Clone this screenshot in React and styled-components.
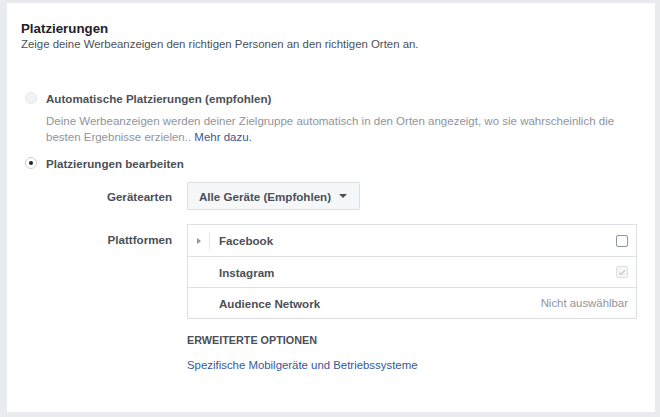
import React from "react";
import styled, { createGlobalStyle } from "styled-components";

const GlobalStyle = createGlobalStyle`
  html, body {
    margin: 0;
    padding: 0;
    background: #e9ebee;
  }
  body {
    font-family: "Liberation Sans", Arial, Helvetica, sans-serif;
    -webkit-font-smoothing: antialiased;
  }
`;

const Page = styled.div`
  width: 660px;
  height: 417px;
  padding: 3px 5px 5px 7px;
  box-sizing: border-box;
`;

const Card = styled.section`
  background: #fff;
  height: 100%;
  box-sizing: border-box;
  padding: 18px 18px 0 14px;
`;

const Title = styled.h2`
  margin: 0;
  font-size: 13.3px;
  font-weight: bold;
  color: #1d2129;
  line-height: 15px;
`;

const Subtitle = styled.p`
  margin: 0;
  font-size: 11.4px;
  color: #4b4f56;
  line-height: 16px;
`;

const Options = styled.div`
  margin-top: 37px;
  display: flex;
  flex-direction: column;
`;

const RadioRow = styled.label`
  display: flex;
  align-items: center;
  gap: 9px;
  padding-left: 4px;
  height: 18px;
  font-size: 11.6px;
  font-weight: bold;
  color: #4b4f56;
`;

const Radio = styled.span`
  width: 12px;
  height: 12px;
  border-radius: 50%;
  box-sizing: border-box;
  border: 1px solid ${({ disabled }) => (disabled ? "#e6e7e9" : "#ccd0d5")};
  background: ${({ disabled }) => (disabled ? "#f2f3f5" : "#fff")};
  display: flex;
  align-items: center;
  justify-content: center;
  flex-shrink: 0;
  &::after {
    content: "";
    display: ${({ checked }) => (checked ? "block" : "none")};
    width: 4px;
    height: 4px;
    border-radius: 50%;
    background: #1d2129;
  }
`;

const Description = styled.p`
  margin: 6px 0 0 25px;
  font-size: 11.5px;
  line-height: 16px;
  color: #90949c;
  max-width: 590px;
`;

const Link = styled.a`
  color: #365899;
  text-decoration: none;
  cursor: pointer;
`;

const Spacer = styled.div`
  height: ${({ h }) => h}px;
`;

const FieldRow = styled.div`
  display: grid;
  grid-template-columns: 152px 1fr;
  column-gap: 14px;
  align-items: ${({ top }) => (top ? "start" : "center")};
`;

const FieldLabel = styled.div`
  text-align: right;
  font-size: 11.6px;
  font-weight: bold;
  color: #4b4f56;
  padding-top: ${({ top }) => (top ? "9px" : "0")};
  padding-right: 1px;
`;

const Dropdown = styled.button`
  justify-self: start;
  display: flex;
  align-items: center;
  gap: 8px;
  height: 28px;
  padding: 0 12px 0 11px;
  border: 1px solid #dddfe2;
  border-radius: 2px;
  background: #f6f7f9;
  font-family: inherit;
  font-size: 11.6px;
  font-weight: bold;
  color: #4b4f56;
`;

const Caret = styled.span`
  width: 0;
  height: 0;
  border-left: 4px solid transparent;
  border-right: 4px solid transparent;
  border-top: 4px solid #4b4f56;
`;

const Table = styled.div`
  border: 1px solid #dddfe2;
  width: 450px;
  box-sizing: border-box;
`;

const PlatformRow = styled.div`
  display: flex;
  align-items: center;
  height: 31px;
  box-sizing: border-box;
  padding-right: 8px;
  & + & {
    border-top: 1px solid #dddfe2;
  }
`;

const Expander = styled.span`
  width: 22px;
  height: 18px;
  display: flex;
  align-items: center;
  justify-content: center;
  border-right: 1px solid ${({ show }) => (show ? "#e9ebee" : "transparent")};
  box-sizing: border-box;
  &::before {
    content: "";
    display: ${({ show }) => (show ? "block" : "none")};
    width: 0;
    height: 0;
    border-top: 3.5px solid transparent;
    border-bottom: 3.5px solid transparent;
    border-left: 4px solid #90949c;
  }
`;

const PlatformName = styled.span`
  flex: 1;
  margin-left: 9px;
  font-size: 11.6px;
  font-weight: bold;
  color: #4b4f56;
`;

const Checkbox = styled.span`
  width: 12px;
  height: 12px;
  box-sizing: border-box;
  border: 1px solid ${({ disabled }) => (disabled ? "#dddfe2" : "#8d949e")};
  border-radius: 2px;
  background: ${({ disabled }) => (disabled ? "#f5f6f7" : "#fff")};
  display: flex;
  align-items: center;
  justify-content: center;
`;

const Note = styled.span`
  font-size: 11.4px;
  color: #90949c;
`;

const Advanced = styled.div`
  margin-left: 166px;
  margin-top: 14px;
`;

const AdvancedTitle = styled.div`
  font-size: 10.8px;
  font-weight: bold;
  color: #4b4f56;
  line-height: 14px;
`;

const AdvancedLink = styled(Link)`
  display: block;
  margin-top: 10px;
  font-size: 11.4px;
  line-height: 16px;
`;

const Check = () => (
  <svg width="8" height="7" viewBox="0 0 8 7">
    <path d="M1 3.6 L3 5.5 L7 1.2" fill="none" stroke="#c7cbd1" strokeWidth="1.3" />
  </svg>
);

const platforms = [
  { name: "Facebook", expand: true, control: "checkbox" },
  { name: "Instagram", control: "checked" },
  { name: "Audience Network", control: "note" },
];

export default function App() {
  return (
    <>
      <GlobalStyle />
      <Page>
        <Card>
          <Title>Platzierungen</Title>
          <Subtitle>
            Zeige deine Werbeanzeigen den richtigen Personen an den richtigen Orten an.
          </Subtitle>
          <Options>
            <RadioRow>
              <Radio disabled />
              Automatische Platzierungen (empfohlen)
            </RadioRow>
            <Description>
              Deine Werbeanzeigen werden deiner Zielgruppe automatisch in den Orten angezeigt, wo
              sie wahrscheinlich die besten Ergebnisse erzielen.. <Link>Mehr dazu.</Link>
            </Description>
            <Spacer h={9} />
            <RadioRow>
              <Radio checked />
              Platzierungen bearbeiten
            </RadioRow>
            <Spacer h={10} />
            <FieldRow>
              <FieldLabel>Gerätearten</FieldLabel>
              <Dropdown>
                Alle Geräte (Empfohlen)
                <Caret />
              </Dropdown>
            </FieldRow>
            <Spacer h={14} />
            <FieldRow top>
              <FieldLabel top>Plattformen</FieldLabel>
              <Table>
                {platforms.map((p) => (
                  <PlatformRow key={p.name}>
                    <Expander show={p.expand} />
                    <PlatformName>{p.name}</PlatformName>
                    {p.control === "checkbox" && <Checkbox />}
                    {p.control === "checked" && (
                      <Checkbox disabled>
                        <Check />
                      </Checkbox>
                    )}
                    {p.control === "note" && <Note>Nicht auswählbar</Note>}
                  </PlatformRow>
                ))}
              </Table>
            </FieldRow>
            <Advanced>
              <AdvancedTitle>ERWEITERTE OPTIONEN</AdvancedTitle>
              <AdvancedLink>Spezifische Mobilgeräte und Betriebssysteme</AdvancedLink>
            </Advanced>
          </Options>
        </Card>
      </Page>
    </>
  );
}
